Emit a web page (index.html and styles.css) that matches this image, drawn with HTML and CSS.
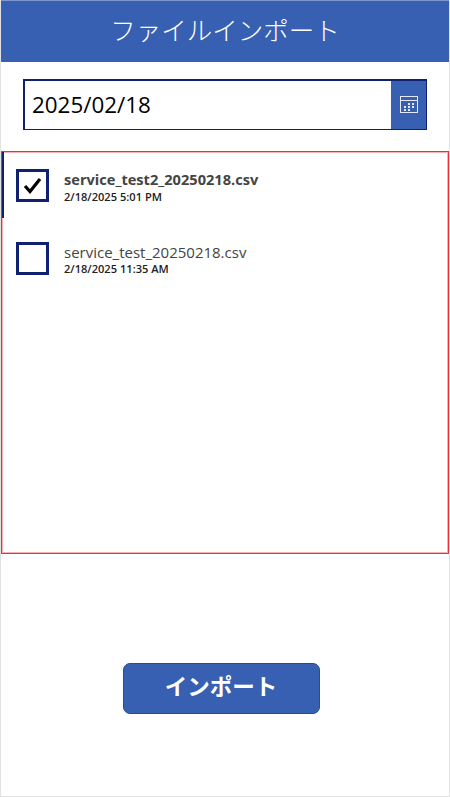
FILE: index.html

```html
<!DOCTYPE html>
<html lang="ja">
<head>
    <meta charset="UTF-8">
    <meta name="viewport" content="width=device-width, initial-scale=1.0">
    <title>ファイルインポート</title>
    <link rel="stylesheet" href="styles.css">
</head>
<body>

<div class="screen">
    <div class="title-bar">ファイルインポート</div>

    <div class="date-picker">
        <div class="date-value">2025/02/18</div>
        <div class="date-button">
            <!-- Calendar icon -->
            <svg class="calendar-icon" width="18" height="17" viewBox="0 0 18 17">
                <rect x="0.5" y="0.5" width="17" height="16" fill="none" stroke="#e4e9f5" stroke-width="1"/>
                <line x1="1" y1="4.5" x2="17" y2="4.5" stroke="#e4e9f5" stroke-width="1"/>
                <rect x="8" y="7" width="2" height="2" fill="#e4e9f5"/>
                <rect x="12" y="7" width="2" height="2" fill="#e4e9f5"/>
                <rect x="4" y="10" width="2" height="2" fill="#e4e9f5"/>
                <rect x="8" y="10" width="2" height="2" fill="#e4e9f5"/>
                <rect x="12" y="10" width="2" height="2" fill="#e4e9f5"/>
                <rect x="4" y="13" width="2" height="2" fill="#e4e9f5"/>
                <rect x="8" y="13" width="2" height="2" fill="#e4e9f5"/>
            </svg>
        </div>
    </div>

    <div class="file-list">
        <div class="file-row selected">
            <div class="check-box">
                <svg width="19" height="17" viewBox="0 0 19 17">
                    <path d="M2 9 L7 14.5 L17 2" fill="none" stroke="#000000" stroke-width="3.2"/>
                </svg>
            </div>
            <div class="file-info">
                <div class="file-name">service_test2_20250218.csv</div>
                <div class="file-date">2/18/2025 5:01 PM</div>
            </div>
        </div>
        <div class="file-row">
            <div class="check-box"></div>
            <div class="file-info">
                <div class="file-name">service_test_20250218.csv</div>
                <div class="file-date">2/18/2025 11:35 AM</div>
            </div>
        </div>
    </div>

    <div class="button-area">
        <button class="import-button">インポート</button>
    </div>
</div>

</body>
</html>
```

FILE: styles.css

```css
* {
    box-sizing: border-box;
}
body {
    margin: 0;
    padding: 0;
    background-color: #ffffff;
    font-family: "Open Sans", "Noto Sans CJK JP", sans-serif;
}
.screen {
    display: flex;
    flex-direction: column;
    width: 450px;
    height: 797px;
    border-left: 1px solid #e2e2e2;
    border-right: 1px solid #e2e2e2;
    border-bottom: 1px solid #e2e2e2;
    overflow: hidden;
}
.title-bar {
    height: 62px;
    padding-bottom: 2px;
    border-top: 1px solid #7d96cb;
    background-color: #3860b2;
    color: #ffffff;
    font-family: "Noto Sans CJK JP", sans-serif;
    font-size: 25.5px;
    font-weight: 300;
    line-height: 56px;
    text-align: center;
}
.date-picker {
    display: flex;
    width: 404px;
    height: 51px;
    margin: 17px 0 0 22px;
    border: 1px solid #0f2170;
    border-top-width: 2px;
    border-left-width: 2px;
}
.date-value {
    flex: 1;
    padding-left: 7px;
    color: #000000;
    font-size: 22.4px;
    line-height: 47px;
}
.date-button {
    display: flex;
    align-items: center;
    justify-content: center;
    width: 35px;
    padding-bottom: 2px;
    background-color: #3860b2;
}
.file-list {
    height: 403px;
    margin-top: 21px;
    border: 1px solid #ee3030;
    box-shadow: inset 0 0 0 1px #f9b0b0;
}
.file-row {
    display: flex;
    align-items: flex-start;
    height: 73px;
    padding: 17px 0 0 12px;
    border-left: 2px solid transparent;
}
.file-row.selected {
    height: 66px;
    margin-bottom: 7px;
    border-left-color: #0f2170;
}
.check-box {
    display: flex;
    align-items: center;
    justify-content: center;
    flex-shrink: 0;
    width: 33px;
    height: 33px;
    border: 3px solid #0f2170;
    background-color: #ffffff;
}
.file-info {
    margin-left: 15px;
}
.file-name {
    color: #444444;
    font-size: 15px;
    line-height: 20px;
}
.selected .file-name {
    font-size: 14.6px;
    font-weight: 700;
    margin-bottom: 1px;
}
.file-date {
    color: #222222;
    font-size: 11.1px;
    font-weight: 600;
    line-height: 14px;
}
.button-area {
    display: flex;
    justify-content: center;
    flex: 1;
    padding: 109px 8px 0 0;
}
.import-button {
    width: 197px;
    height: 51px;
    padding: 0 0 8px;
    border: 1px solid #2a4a94;
    border-radius: 7px;
    background-color: #3860b2;
    color: #ffffff;
    font-family: "Noto Sans CJK JP", sans-serif;
    font-size: 22.5px;
    font-weight: 700;
}
```
